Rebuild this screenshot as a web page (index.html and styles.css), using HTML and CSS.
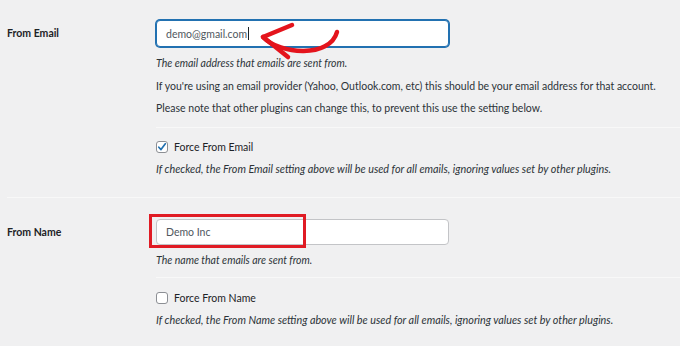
FILE: index.html
```html
<!DOCTYPE html>
<html>
<head>
<meta charset="utf-8">
<link rel="stylesheet" href="styles.css">
</head>
<body>
<div class="form-table">
  <div class="row row-email">
    <div class="label">From Email</div>
    <div class="field">
      <div class="input-wrap">
        <div class="input focused"><span class="value">demo@gmail.com</span><span class="caret"></span></div>
        <svg class="arrow" width="95" height="50" viewBox="0 0 95 50">
          <path d="M13 22 C30 40 80 43 87 17" fill="none" stroke="#e4141c" stroke-width="4.5" stroke-linecap="round"/>
          <path d="M42 10 L13 22 L38 42" fill="none" stroke="#e4141c" stroke-width="4.5" stroke-linecap="round" stroke-linejoin="round"/>
        </svg>
      </div>
      <p class="desc desc-first"><em>The email address that emails are sent from.</em></p>
      <p class="desc">If you're using an email provider (Yahoo, Outlook.com, etc) this should be your email address for that account.</p>
      <p class="desc">Please note that other plugins can change this, to prevent this use the setting below.</p>
      <hr class="sep">
      <label class="check"><span class="box checked"><svg width="10" height="10" viewBox="0 0 10 10"><path d="M1.8 5.2 L4 7.6 L8.3 1.8" fill="none" stroke="#2271b1" stroke-width="1.7" stroke-linecap="round" stroke-linejoin="round"/></svg></span>Force From Email</label>
      <p class="desc note"><em>If checked, the From Email setting above will be used for all emails, ignoring values set by other plugins.</em></p>
    </div>
  </div>
  <hr class="row-sep">
  <div class="row row-name">
    <div class="label">From Name</div>
    <div class="field">
      <div class="input-wrap">
        <div class="input"><span class="value">Demo Inc</span></div>
        <div class="highlight"></div>
      </div>
      <p class="desc desc-first"><em>The name that emails are sent from.</em></p>
      <hr class="sep sep-name">
      <label class="check"><span class="box"></span>Force From Name</label>
      <p class="desc note"><em>If checked, the From Name setting above will be used for all emails, ignoring values set by other plugins.</em></p>
    </div>
  </div>
</div>
</body>
</html>
```
FILE: styles.css
```css
html, body {
  margin: 0;
  padding: 0;
  background: #f0f0f1;
}
body {
  font-family: "Lato", "Liberation Sans", sans-serif;
  font-size: 10.5px;
  color: #1d2327;
  width: 680px;
  height: 346px;
  overflow: hidden;
}
.form-table {
  padding-left: 7px;
}
.row {
  display: grid;
  grid-template-columns: 149px 1fr;
}
.row-email {
  padding-top: 20px;
  padding-bottom: 17px;
}
.row-name {
  padding-top: 21px;
}
.label {
  font-weight: 700;
  font-size: 10.5px;
  height: 27px;
  line-height: 27px;
}
.row-name .label {
  height: 26px;
  line-height: 26px;
}
.input-wrap {
  position: relative;
  width: 293px;
}
.input {
  box-sizing: border-box;
  height: 27px;
  width: 293px;
  background: #fff;
  border: 1px solid #c3c4c7;
  border-radius: 4px;
  padding-left: 9px;
  color: #50575e;
  font-size: 10.5px;
  display: flex;
  align-items: center;
}
.row-name .input {
  height: 26px;
}
.input.focused {
  border-color: #2271b1;
  box-shadow: 0 0 0 1px #2271b1;
}
.caret {
  display: inline-block;
  width: 1px;
  height: 13px;
  background: #1d2327;
  margin-left: 1px;
}
.arrow {
  position: absolute;
  left: 94px;
  top: -5px;
}
.highlight {
  position: absolute;
  left: -7px;
  top: -5px;
  width: 157px;
  height: 34px;
  box-sizing: border-box;
  border: 3px solid #e01b24;
}
.desc {
  margin: 0;
  line-height: 22.5px;
  color: #2c3338;
  white-space: nowrap;
}
.desc-first {
  margin-top: 5px;
}
.row-name .desc-first {
  margin-top: 4px;
}
.sep {
  border: 0;
  height: 1px;
  background: #f8f8f8;
  margin: 7px 0 0 0;
}
.sep-name {
  margin-top: 5px;
}
.row-sep {
  border: 0;
  height: 1px;
  background: #f8f8f8;
  margin: 0;
}
.check {
  display: flex;
  align-items: center;
  margin-top: 12px;
  height: 14px;
  font-size: 10.5px;
}
.row-name .check {
  margin-top: 13px;
}
.box {
  box-sizing: border-box;
  width: 12px;
  height: 12px;
  border: 1px solid #8c8f94;
  border-radius: 3px;
  background: #fff;
  margin-right: 6px;
  display: flex;
  align-items: center;
  justify-content: center;
}
.note {
  margin-top: 4px;
  font-size: 10.8px;
}
```
